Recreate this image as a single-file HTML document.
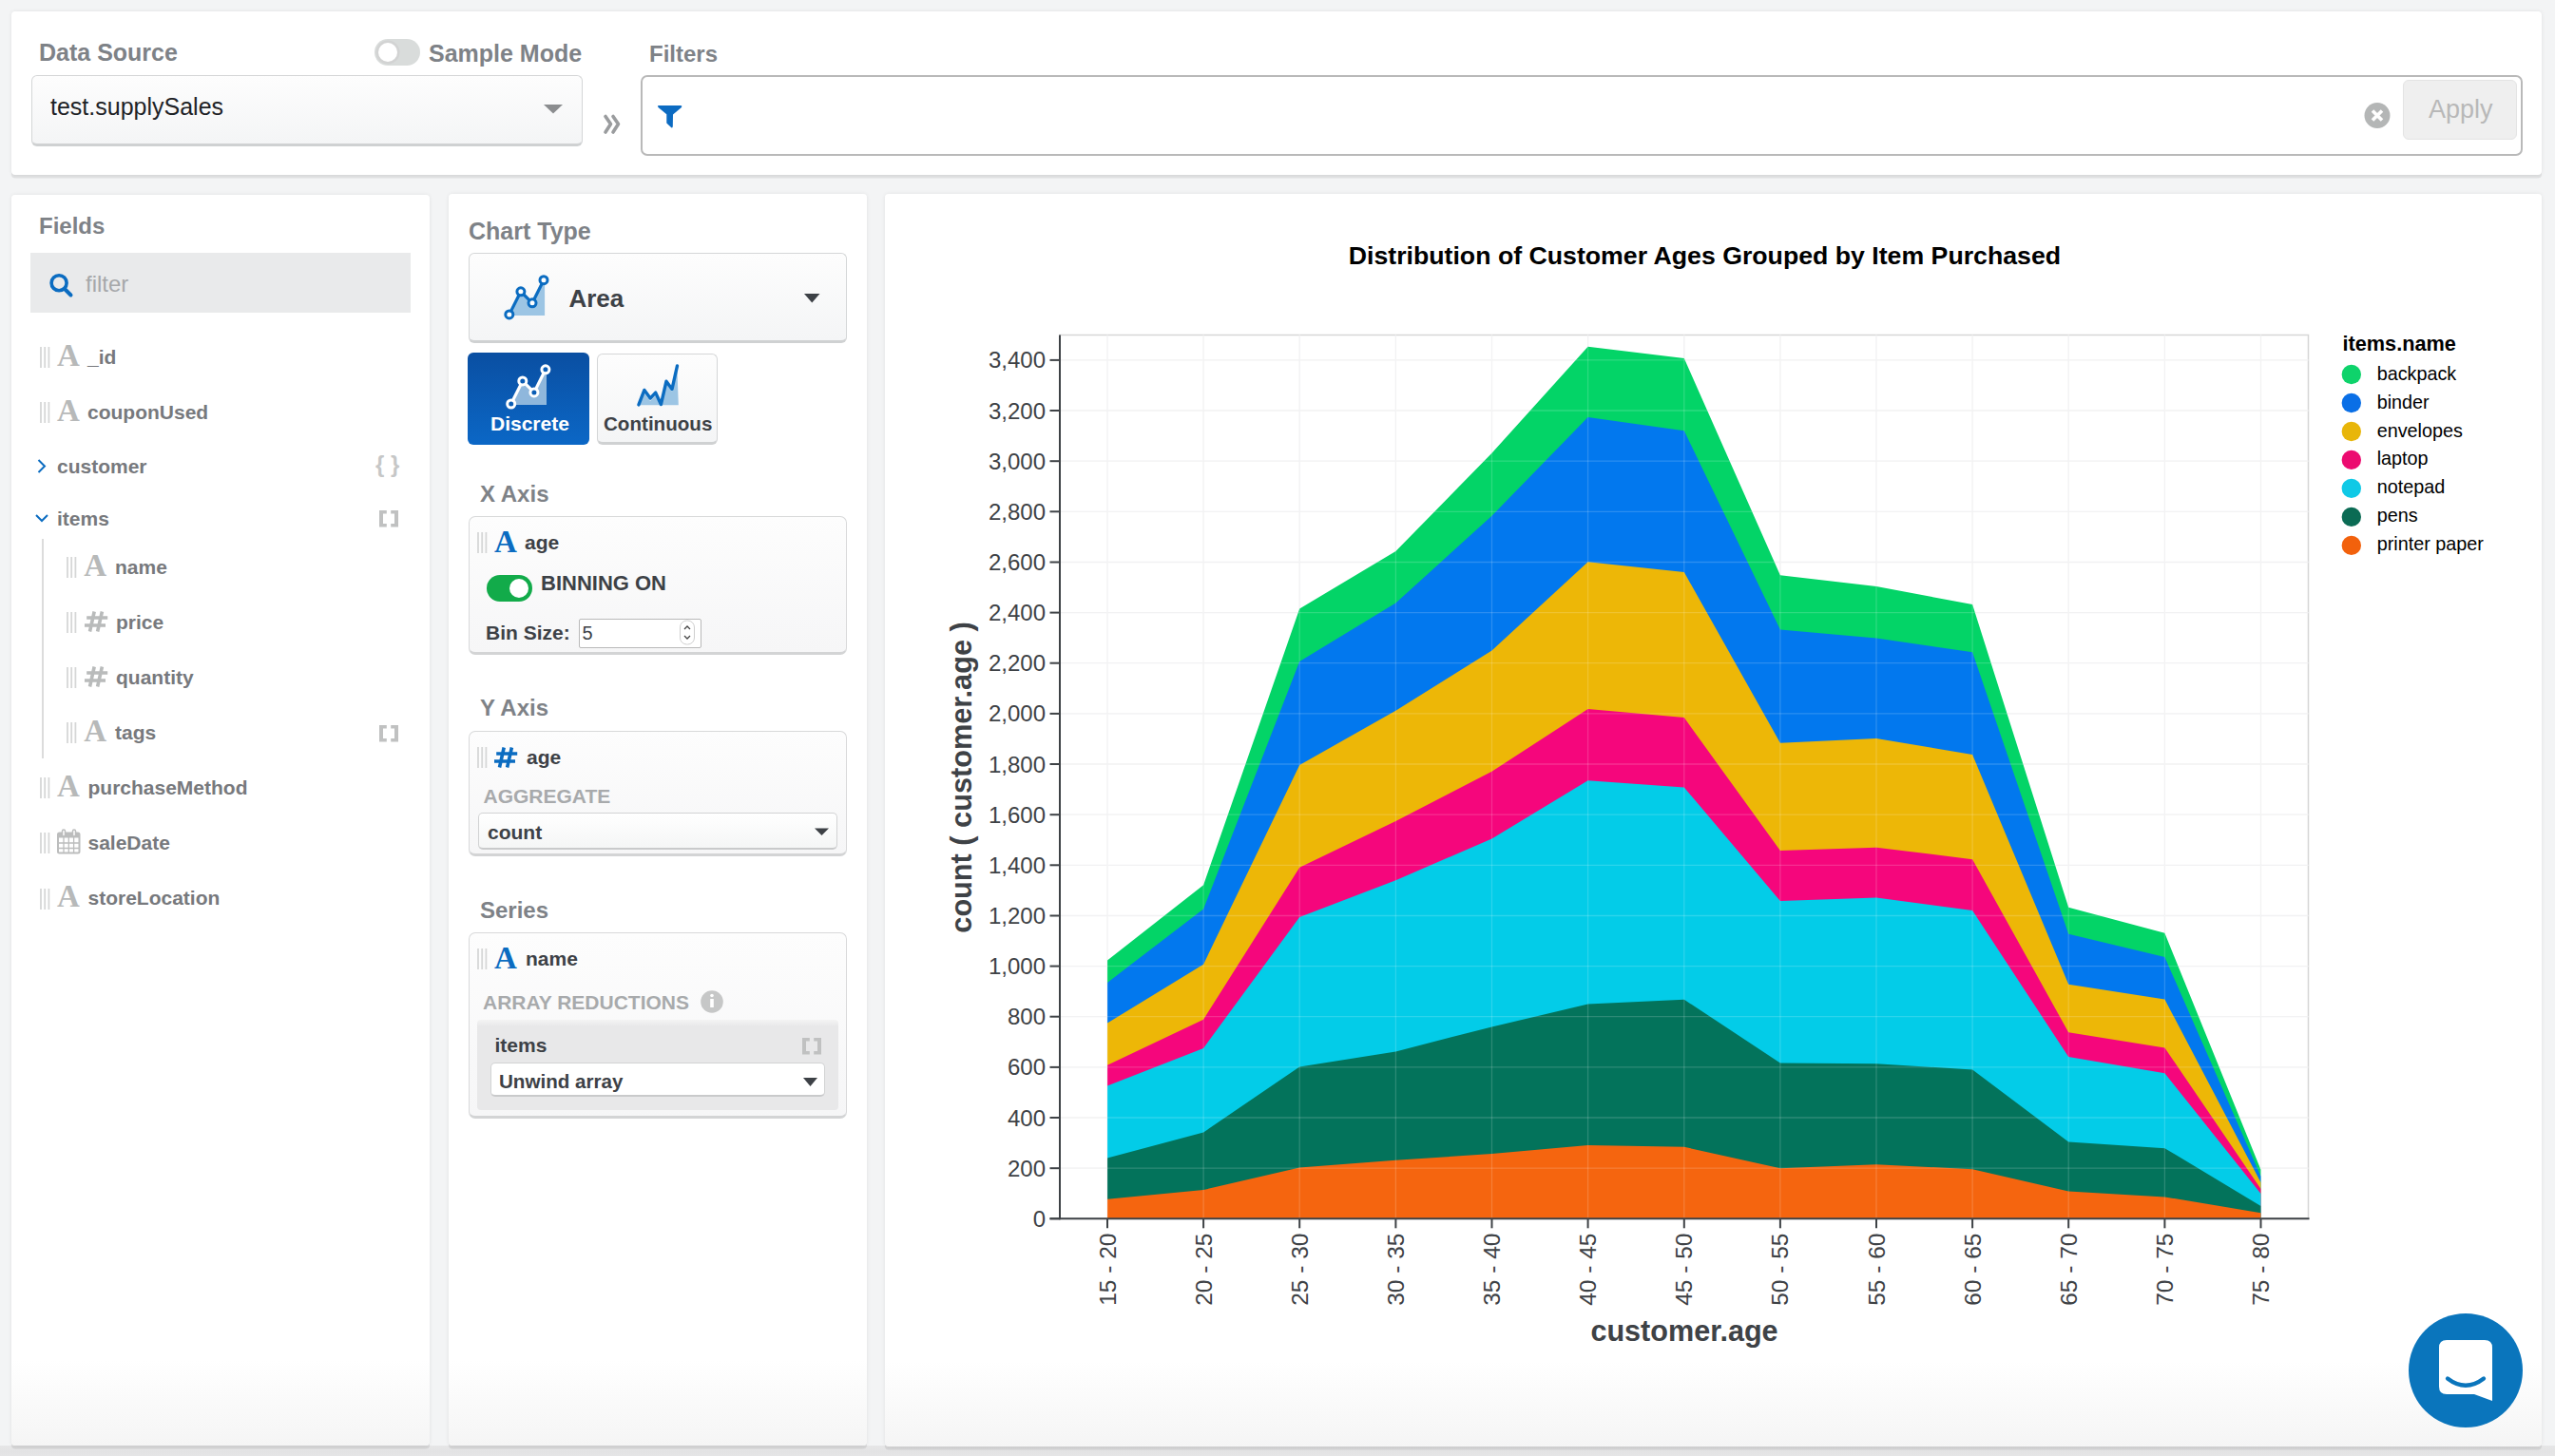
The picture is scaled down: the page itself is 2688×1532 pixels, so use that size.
<!DOCTYPE html>
<html><head><meta charset="utf-8"><title>Chart Builder</title>
<style>
html,body{margin:0;padding:0}
body{width:2688px;height:1532px;position:relative;overflow:hidden;background:#f3f4f5;font-family:"Liberation Sans",sans-serif}
.t{position:absolute;line-height:1;white-space:nowrap}
.ab{position:absolute;overflow:visible}
.ab text{font-family:"Liberation Sans",sans-serif}
.panel{position:absolute;background:#fff;border-radius:4px;box-shadow:0 0 4px rgba(0,0,0,.08),0 3.5px 0 rgba(0,0,0,.07)}
.pg{background:linear-gradient(#fff calc(100% - 90px),#f5f5f5)}
.sel{position:absolute;box-sizing:border-box;border:1px solid #d4d6d7;border-bottom:3px solid #cfd1d2;border-radius:6px;background:linear-gradient(#fdfdfd,#f4f5f6)}
.sel2{position:absolute;box-sizing:border-box;border:1px solid #d2d3d4;border-bottom:2px solid #c9cacb;border-radius:5px;background:linear-gradient(#ffffff,#f5f6f6)}
.card{position:absolute;box-sizing:border-box;border:1px solid #d8d9da;border-bottom:3px solid #d3d4d5;border-radius:7px;background:linear-gradient(#fdfdfd,#f6f6f7)}
</style></head><body>
<div style="position:absolute;left:0;top:1521px;width:2688px;height:11px;background:linear-gradient(#e6e6e7,#e3e3e4 6px,#e5e5e6)"></div>
<div class="panel" style="left:12px;top:12px;width:2662px;height:172px"></div>
<div class="panel pg" style="left:12px;top:205px;width:440px;height:1316px"></div>
<div class="panel pg" style="left:472px;top:204px;width:440px;height:1317px"></div>
<div class="panel pg" style="left:931px;top:204px;width:1743px;height:1318px"></div>
<div class="t" style="left:41.0px;top:43.4px;font-size:25px;color:#7e8287;font-weight:700;font-family:'Liberation Sans',sans-serif;">Data Source</div>
<div style="position:absolute;left:394px;top:41px;width:47.5px;height:28px;border-radius:14px;background:#d9dcdb;"></div>
<div style="position:absolute;left:398px;top:45px;width:20px;height:20px;border-radius:50%;background:#fff;box-shadow:0 0 0 2.5px #d2d3d3"></div>
<div class="t" style="left:451.0px;top:43.6px;font-size:25px;color:#7e8287;font-weight:700;font-family:'Liberation Sans',sans-serif;">Sample Mode</div>
<div class="t" style="left:683.0px;top:44.5px;font-size:24px;color:#7e8287;font-weight:700;font-family:'Liberation Sans',sans-serif;">Filters</div>
<div class="sel" style="left:33px;top:79px;width:580px;height:75px;"></div>
<div class="t" style="left:53.0px;top:100.4px;font-size:25px;color:#1d2226;font-weight:400;font-family:'Liberation Sans',sans-serif;">test.supplySales</div>
<svg class="ab" style="left:0;top:0" width="2688" height="200"><polygon points="572,110 592,110 582,119.5" fill="#8b8d8f"/><path d="M637,122.5 L642.5,130.5 L637,139 M645,122.5 L650.5,130.5 L645,139" stroke="#9a9c9e" stroke-width="3.6" fill="none" stroke-linecap="round" stroke-linejoin="round"/></svg>
<div style="position:absolute;left:674px;top:79px;width:1976px;height:81px;border:2px solid #b9b9b9;border-radius:7px;background:#fff"></div>
<div style="position:absolute;left:2528px;top:84px;width:118px;height:61px;border:1px solid #e4e4e4;border-radius:6px;background:#efefef"></div>
<div class="t" style="left:2555.0px;top:101.6px;font-size:27px;color:#b8b8b8;font-weight:400;font-family:'Liberation Sans',sans-serif;">Apply</div>
<svg class="ab" style="left:0;top:0" width="2688" height="200"><path d="M692.5,111 L716.5,111 Q718,111.5 717,113 L708,120.5 L707.8,133 Q707.5,135.5 705.5,133.5 L701.3,129.5 L701.3,120.2 L692.5,113 Q691.5,111.5 692.5,111 Z" fill="#0c6bc2"/><circle cx="2501" cy="121.5" r="13.5" fill="#b4b6b6"/><path d="M2496,116.5 L2506,126.5 M2506,116.5 L2496,126.5" stroke="#fff" stroke-width="3.6"/></svg>
<div class="t" style="left:41.0px;top:226.2px;font-size:24px;color:#7e8287;font-weight:700;font-family:'Liberation Sans',sans-serif;">Fields</div>
<div style="position:absolute;left:32px;top:266px;width:400px;height:63px;background:#e9eaeb;"></div>
<svg class="ab" style="left:0;top:0" width="460" height="1000"><circle cx="62.1" cy="297.7" r="8" stroke="#0b6cc1" stroke-width="3.6" fill="none"/><line x1="68.5" y1="304.5" x2="74.5" y2="310.5" stroke="#0b6cc1" stroke-width="4" stroke-linecap="round"/></svg>
<div class="t" style="left:90.0px;top:286.7px;font-size:24px;color:#a6a8aa;font-weight:400;font-family:'Liberation Sans',sans-serif;">filter</div>
<svg class="ab" style="left:42px;top:365.2px" width="12" height="22"><path d="M1,0 V22 M5.2,0 V22 M9.4,0 V22" stroke="#d6d7d7" stroke-width="1.8"/></svg>
<div class="t" style="left:60.0px;top:357.9px;font-size:33px;color:#b7b9b9;font-weight:700;font-family:'Liberation Serif',sans-serif;">A</div>
<div class="t" style="left:92.0px;top:364.9px;font-size:21px;color:#77797d;font-weight:700;font-family:'Liberation Sans',sans-serif;">_id</div>
<svg class="ab" style="left:42px;top:423.3px" width="12" height="22"><path d="M1,0 V22 M5.2,0 V22 M9.4,0 V22" stroke="#d6d7d7" stroke-width="1.8"/></svg>
<div class="t" style="left:60.0px;top:416.0px;font-size:33px;color:#b7b9b9;font-weight:700;font-family:'Liberation Serif',sans-serif;">A</div>
<div class="t" style="left:92.0px;top:423.0px;font-size:21px;color:#77797d;font-weight:700;font-family:'Liberation Sans',sans-serif;">couponUsed</div>
<svg class="ab" style="left:0;top:0" width="460" height="1000"><polyline points="40.5,484 47,490.5 40.5,497" stroke="#0b6cc1" stroke-width="2" fill="none"/><polyline points="38,542 44,548 50,542" stroke="#0b6cc1" stroke-width="2" fill="none"/></svg>
<div class="t" style="left:60.0px;top:480.0px;font-size:21px;color:#77797d;font-weight:700;font-family:'Liberation Sans',sans-serif;">customer</div>
<div class="t" style="left:395.0px;top:476.7px;font-size:24px;color:#c6c7c7;font-weight:700;font-family:'Liberation Sans',sans-serif;">{ }</div>
<div class="t" style="left:60.0px;top:535.1px;font-size:21px;color:#77797d;font-weight:700;font-family:'Liberation Sans',sans-serif;">items</div>
<svg class="ab" style="left:399px;top:537px" width="21" height="19"><path d="M0,0 H7.8 V3.6 H4 V13.9 H7.8 V17.5 H0 Z M20,0 H12.2 V3.6 H16 V13.9 H12.2 V17.5 H20 Z" fill="#c0c1c1"/></svg>
<div style="position:absolute;left:44px;top:567px;width:2px;height:231px;background:#dcdcdc"></div>
<svg class="ab" style="left:70px;top:586.0px" width="12" height="22"><path d="M1,0 V22 M5.2,0 V22 M9.4,0 V22" stroke="#d6d7d7" stroke-width="1.8"/></svg>
<div class="t" style="left:88.2px;top:578.7px;font-size:33px;color:#b7b9b9;font-weight:700;font-family:'Liberation Serif',sans-serif;">A</div>
<div class="t" style="left:121.0px;top:585.7px;font-size:21px;color:#77797d;font-weight:700;font-family:'Liberation Sans',sans-serif;">name</div>
<svg class="ab" style="left:70px;top:643.9px" width="12" height="22"><path d="M1,0 V22 M5.2,0 V22 M9.4,0 V22" stroke="#d6d7d7" stroke-width="1.8"/></svg>
<svg class="ab" style="left:88.8px;top:643.1999999999999px" width="26" height="23"><path d="M10.2,0.5 L5.5,21.5 M18.4,0.5 L13.6,21.5 M2.2,7 H24.2 M0,15 H22" stroke="#b9bbbb" stroke-width="3.6" fill="none"/></svg>
<div class="t" style="left:122.0px;top:643.6px;font-size:21px;color:#77797d;font-weight:700;font-family:'Liberation Sans',sans-serif;">price</div>
<svg class="ab" style="left:70px;top:702.1px" width="12" height="22"><path d="M1,0 V22 M5.2,0 V22 M9.4,0 V22" stroke="#d6d7d7" stroke-width="1.8"/></svg>
<svg class="ab" style="left:88.8px;top:701.4px" width="26" height="23"><path d="M10.2,0.5 L5.5,21.5 M18.4,0.5 L13.6,21.5 M2.2,7 H24.2 M0,15 H22" stroke="#b9bbbb" stroke-width="3.6" fill="none"/></svg>
<div class="t" style="left:122.0px;top:701.8px;font-size:21px;color:#77797d;font-weight:700;font-family:'Liberation Sans',sans-serif;">quantity</div>
<svg class="ab" style="left:70px;top:760.2px" width="12" height="22"><path d="M1,0 V22 M5.2,0 V22 M9.4,0 V22" stroke="#d6d7d7" stroke-width="1.8"/></svg>
<div class="t" style="left:88.2px;top:752.9px;font-size:33px;color:#b7b9b9;font-weight:700;font-family:'Liberation Serif',sans-serif;">A</div>
<div class="t" style="left:121.0px;top:759.9px;font-size:21px;color:#77797d;font-weight:700;font-family:'Liberation Sans',sans-serif;">tags</div>
<svg class="ab" style="left:399px;top:762.5px" width="21" height="19"><path d="M0,0 H7.8 V3.6 H4 V13.9 H7.8 V17.5 H0 Z M20,0 H12.2 V3.6 H16 V13.9 H12.2 V17.5 H20 Z" fill="#c0c1c1"/></svg>
<svg class="ab" style="left:42px;top:818.0px" width="12" height="22"><path d="M1,0 V22 M5.2,0 V22 M9.4,0 V22" stroke="#d6d7d7" stroke-width="1.8"/></svg>
<div class="t" style="left:60.1px;top:810.7px;font-size:33px;color:#b7b9b9;font-weight:700;font-family:'Liberation Serif',sans-serif;">A</div>
<div class="t" style="left:92.5px;top:817.7px;font-size:21px;color:#77797d;font-weight:700;font-family:'Liberation Sans',sans-serif;">purchaseMethod</div>
<svg class="ab" style="left:42px;top:876.1px" width="12" height="22"><path d="M1,0 V22 M5.2,0 V22 M9.4,0 V22" stroke="#d6d7d7" stroke-width="1.8"/></svg>
<svg class="ab" style="left:60px;top:872px" width="25" height="27"><rect x="1" y="4.5" width="22.5" height="21" rx="1.5" fill="none" stroke="#bcbdbd" stroke-width="2"/><rect x="1" y="4.5" width="22.5" height="5" fill="#bcbdbd"/><path d="M7,9 V25 M12.3,9 V25 M17.6,9 V25 M1,15 H23.5 M1,20.5 H23.5" stroke="#bcbdbd" stroke-width="1.3"/><rect x="5.5" y="1" width="3" height="7" rx="1.5" fill="#fff" stroke="#bcbdbd" stroke-width="1.5"/><rect x="16.5" y="1" width="3" height="7" rx="1.5" fill="#fff" stroke="#bcbdbd" stroke-width="1.5"/></svg>
<div class="t" style="left:92.5px;top:875.8px;font-size:21px;color:#77797d;font-weight:700;font-family:'Liberation Sans',sans-serif;">saleDate</div>
<svg class="ab" style="left:42px;top:934.5px" width="12" height="22"><path d="M1,0 V22 M5.2,0 V22 M9.4,0 V22" stroke="#d6d7d7" stroke-width="1.8"/></svg>
<div class="t" style="left:60.1px;top:927.2px;font-size:33px;color:#b7b9b9;font-weight:700;font-family:'Liberation Serif',sans-serif;">A</div>
<div class="t" style="left:92.5px;top:934.2px;font-size:21px;color:#77797d;font-weight:700;font-family:'Liberation Sans',sans-serif;">storeLocation</div>
<div class="t" style="left:493.0px;top:230.5px;font-size:25px;color:#7e8287;font-weight:700;font-family:'Liberation Sans',sans-serif;">Chart Type</div>
<div class="sel" style="left:493px;top:266px;width:398px;height:95px;"></div>
<svg class="ab" style="left:0;top:0" width="920" height="1200"><polygon points="538.8,331.9 538.8,325.9 547.9,306.8 560.0,318.8 572.0,294.7 573.0999999999999,298.7 573.0999999999999,331.9" fill="#9cc5e4"/><polyline points="535.8,330.9 547.9,306.8 560.0,318.8 572.0,294.7" stroke="#0b6cc1" stroke-width="3.2" fill="none"/><circle cx="535.8" cy="330.9" r="4" fill="#fff" stroke="#0b6cc1" stroke-width="3"/><circle cx="547.9" cy="306.8" r="4" fill="#fff" stroke="#0b6cc1" stroke-width="3"/><circle cx="560.0" cy="318.8" r="4" fill="#fff" stroke="#0b6cc1" stroke-width="3"/><circle cx="572.0" cy="294.7" r="4" fill="#fff" stroke="#0b6cc1" stroke-width="3"/><polygon points="846,309 862.5,309 854.25,318.5" fill="#3d4146"/></svg>
<div class="t" style="left:598.4px;top:300.5px;font-size:26px;color:#3d4146;font-weight:700;font-family:'Liberation Sans',sans-serif;">Area</div>
<div style="position:absolute;left:492px;top:371px;width:128px;height:97px;border-radius:6px;background:linear-gradient(#0a4fa2,#0b67c6);"></div>
<div class="sel" style="left:628px;top:371.5px;width:127px;height:96px;"></div>
<svg class="ab" style="left:0;top:0" width="920" height="1200"><polygon points="540.7,426 540.7,420 549.8,400.9 561.9,412.9 573.9,388.8 575.0,392.8 575.0,426" fill="#8fb7dc"/><polyline points="537.7,425.0 549.8,400.9 561.9,412.9 573.9,388.8" stroke="#ffffff" stroke-width="3.2" fill="none"/><circle cx="537.7" cy="425.0" r="4" fill="#0b5db5" stroke="#ffffff" stroke-width="3"/><circle cx="549.8" cy="400.9" r="4" fill="#0b5db5" stroke="#ffffff" stroke-width="3"/><circle cx="561.9" cy="412.9" r="4" fill="#0b5db5" stroke="#ffffff" stroke-width="3"/><circle cx="573.9" cy="388.8" r="4" fill="#0b5db5" stroke="#ffffff" stroke-width="3"/><polygon points="712.5,390 713.8,426.3 672.5,426.3 677.9,414 684.1,422 689.7,416 695.4,426 701,404 707,412" fill="#9cc5e4"/><polyline points="671.9,425.9 677.9,410.4 684.1,419.1 689.7,413.1 695.4,425.5 701,401.2 707,409.4 712.5,384.9" stroke="#0b6cc1" stroke-width="3.4" fill="none" stroke-linejoin="round" stroke-linecap="round"/></svg>
<div class="t" style="left:516.0px;top:435.2px;font-size:21px;color:#ffffff;font-weight:700;font-family:'Liberation Sans',sans-serif;">Discrete</div>
<div class="t" style="left:635.0px;top:435.6px;font-size:20.6px;color:#3d4146;font-weight:700;font-family:'Liberation Sans',sans-serif;">Continuous</div>
<div class="t" style="left:505.0px;top:508.1px;font-size:24px;color:#7e8287;font-weight:700;font-family:'Liberation Sans',sans-serif;">X Axis</div>
<div class="card" style="left:492.5px;top:543px;width:398px;height:146px;"></div>
<svg class="ab" style="left:502px;top:560px" width="12" height="22"><path d="M1,0 V22 M5.2,0 V22 M9.4,0 V22" stroke="#d6d7d7" stroke-width="1.8"/></svg>
<div class="t" style="left:520.0px;top:554.1px;font-size:33px;color:#0b6cc1;font-weight:700;font-family:'Liberation Serif',sans-serif;">A</div>
<div class="t" style="left:552.0px;top:560.4px;font-size:21px;color:#3d4146;font-weight:700;font-family:'Liberation Sans',sans-serif;">age</div>
<div style="position:absolute;left:512px;top:604.5px;width:48px;height:28px;border-radius:14px;background:#12ab4a"></div>
<div style="position:absolute;left:536px;top:609px;width:20px;height:20px;border-radius:50%;background:#fff"></div>
<div class="t" style="left:569.0px;top:602.8px;font-size:22px;color:#3d4146;font-weight:700;font-family:'Liberation Sans',sans-serif;">BINNING ON</div>
<div class="t" style="left:511.0px;top:655.0px;font-size:21px;color:#3d4146;font-weight:700;font-family:'Liberation Sans',sans-serif;">Bin Size:</div>
<div style="position:absolute;left:608.5px;top:650.5px;width:127px;height:29px;border:1px solid #b9b9b9;background:#fff;border-radius:2px"></div>
<div class="t" style="left:612.6px;top:655.6px;font-size:20px;color:#3d4146;font-weight:400;font-family:'Liberation Sans',sans-serif;">5</div>
<svg class="ab" style="left:0;top:0" width="920" height="1200"><rect x="715.5" y="653" width="15" height="25" rx="7" fill="#fff" stroke="#cfcfcf" stroke-width="1"/><polyline points="720,662 723,659 726,662" stroke="#444" stroke-width="1.3" fill="none"/><polyline points="720,669 723,672 726,669" stroke="#444" stroke-width="1.3" fill="none"/></svg>
<div class="t" style="left:505.0px;top:733.2px;font-size:24px;color:#7e8287;font-weight:700;font-family:'Liberation Sans',sans-serif;">Y Axis</div>
<div class="card" style="left:492.5px;top:768.5px;width:398px;height:132px;"></div>
<svg class="ab" style="left:502px;top:786px" width="12" height="22"><path d="M1,0 V22 M5.2,0 V22 M9.4,0 V22" stroke="#d6d7d7" stroke-width="1.8"/></svg>
<svg class="ab" style="left:520.4px;top:785.8px" width="26" height="23"><path d="M10.2,0.5 L5.5,21.5 M18.4,0.5 L13.6,21.5 M2.2,7 H24.2 M0,15 H22" stroke="#0b6cc1" stroke-width="3.6" fill="none"/></svg>
<div class="t" style="left:554.0px;top:785.6px;font-size:21px;color:#3d4146;font-weight:700;font-family:'Liberation Sans',sans-serif;">age</div>
<div class="t" style="left:508.5px;top:827.2px;font-size:21px;color:#a8aaac;font-weight:700;font-family:'Liberation Sans',sans-serif;">AGGREGATE</div>
<div class="sel2" style="left:503px;top:854.5px;width:378px;height:39px;"></div>
<div class="t" style="left:513.0px;top:865.0px;font-size:21px;color:#3d4146;font-weight:700;font-family:'Liberation Sans',sans-serif;">count</div>
<svg class="ab" style="left:0;top:0" width="920" height="1200"><polygon points="857,871.5 872,871.5 864.5,879" fill="#3d4146"/></svg>
<div class="t" style="left:505.0px;top:945.5px;font-size:24px;color:#7e8287;font-weight:700;font-family:'Liberation Sans',sans-serif;">Series</div>
<div class="card" style="left:493px;top:981px;width:398px;height:196px;"></div>
<svg class="ab" style="left:502px;top:998px" width="12" height="22"><path d="M1,0 V22 M5.2,0 V22 M9.4,0 V22" stroke="#d6d7d7" stroke-width="1.8"/></svg>
<div class="t" style="left:520.0px;top:991.6px;font-size:33px;color:#0b6cc1;font-weight:700;font-family:'Liberation Serif',sans-serif;">A</div>
<div class="t" style="left:553.0px;top:997.8px;font-size:21px;color:#3d4146;font-weight:700;font-family:'Liberation Sans',sans-serif;">name</div>
<div class="t" style="left:508.0px;top:1044.2px;font-size:21px;color:#a8aaac;font-weight:700;font-family:'Liberation Sans',sans-serif;">ARRAY REDUCTIONS</div>
<svg class="ab" style="left:0;top:0" width="920" height="1200"><circle cx="749" cy="1054" r="11.8" fill="#c6c7c7"/><circle cx="749" cy="1047.5" r="1.8" fill="#fff"/><rect x="747.2" y="1051" width="3.6" height="9" fill="#fff"/></svg>
<div style="position:absolute;left:502px;top:1073px;width:380px;height:95px;background:linear-gradient(#f4f4f4,#e8e8e9 7px,#e8e8e9);border-radius:4px"></div>
<div class="t" style="left:520.5px;top:1089.2px;font-size:21px;color:#3d4146;font-weight:700;font-family:'Liberation Sans',sans-serif;">items</div>
<svg class="ab" style="left:844px;top:1091.5px" width="21" height="19"><path d="M0,0 H7.8 V3.6 H4 V13.9 H7.8 V17.5 H0 Z M20,0 H12.2 V3.6 H16 V13.9 H12.2 V17.5 H20 Z" fill="#c0c1c1"/></svg>
<div class="sel2" style="left:515.5px;top:1118px;width:352px;height:36px;background:#fff"></div>
<div class="t" style="left:525.0px;top:1128.0px;font-size:20.6px;color:#3d4146;font-weight:700;font-family:'Liberation Sans',sans-serif;">Unwind array</div>
<svg class="ab" style="left:0;top:0" width="920" height="1200"><polygon points="845,1134 860,1134 852.5,1143" fill="#3d4146"/></svg>
<svg class="ab" style="left:0;top:0" width="2688" height="1532"><rect x="1115" y="352.5" width="1313.5" height="929.8" fill="#fff" stroke="#d6d6d6" stroke-width="1.5"/><line x1="1115" x2="2428.5" y1="1282.3" y2="1282.3" stroke="#f0f0f1" stroke-width="1.3"/><line x1="1115" x2="2428.5" y1="1229.2" y2="1229.2" stroke="#f0f0f1" stroke-width="1.3"/><line x1="1115" x2="2428.5" y1="1176.0" y2="1176.0" stroke="#f0f0f1" stroke-width="1.3"/><line x1="1115" x2="2428.5" y1="1122.9" y2="1122.9" stroke="#f0f0f1" stroke-width="1.3"/><line x1="1115" x2="2428.5" y1="1069.7" y2="1069.7" stroke="#f0f0f1" stroke-width="1.3"/><line x1="1115" x2="2428.5" y1="1016.6" y2="1016.6" stroke="#f0f0f1" stroke-width="1.3"/><line x1="1115" x2="2428.5" y1="963.5" y2="963.5" stroke="#f0f0f1" stroke-width="1.3"/><line x1="1115" x2="2428.5" y1="910.3" y2="910.3" stroke="#f0f0f1" stroke-width="1.3"/><line x1="1115" x2="2428.5" y1="857.2" y2="857.2" stroke="#f0f0f1" stroke-width="1.3"/><line x1="1115" x2="2428.5" y1="804.0" y2="804.0" stroke="#f0f0f1" stroke-width="1.3"/><line x1="1115" x2="2428.5" y1="750.9" y2="750.9" stroke="#f0f0f1" stroke-width="1.3"/><line x1="1115" x2="2428.5" y1="697.7" y2="697.7" stroke="#f0f0f1" stroke-width="1.3"/><line x1="1115" x2="2428.5" y1="644.6" y2="644.6" stroke="#f0f0f1" stroke-width="1.3"/><line x1="1115" x2="2428.5" y1="591.5" y2="591.5" stroke="#f0f0f1" stroke-width="1.3"/><line x1="1115" x2="2428.5" y1="538.3" y2="538.3" stroke="#f0f0f1" stroke-width="1.3"/><line x1="1115" x2="2428.5" y1="485.2" y2="485.2" stroke="#f0f0f1" stroke-width="1.3"/><line x1="1115" x2="2428.5" y1="432.0" y2="432.0" stroke="#f0f0f1" stroke-width="1.3"/><line x1="1115" x2="2428.5" y1="378.9" y2="378.9" stroke="#f0f0f1" stroke-width="1.3"/><line x1="1165.0" x2="1165.0" y1="352.5" y2="1282" stroke="#f0f0f1" stroke-width="1.3"/><line x1="1266.1" x2="1266.1" y1="352.5" y2="1282" stroke="#f0f0f1" stroke-width="1.3"/><line x1="1367.2" x2="1367.2" y1="352.5" y2="1282" stroke="#f0f0f1" stroke-width="1.3"/><line x1="1468.4" x2="1468.4" y1="352.5" y2="1282" stroke="#f0f0f1" stroke-width="1.3"/><line x1="1569.5" x2="1569.5" y1="352.5" y2="1282" stroke="#f0f0f1" stroke-width="1.3"/><line x1="1670.6" x2="1670.6" y1="352.5" y2="1282" stroke="#f0f0f1" stroke-width="1.3"/><line x1="1771.8" x2="1771.8" y1="352.5" y2="1282" stroke="#f0f0f1" stroke-width="1.3"/><line x1="1872.9" x2="1872.9" y1="352.5" y2="1282" stroke="#f0f0f1" stroke-width="1.3"/><line x1="1974.0" x2="1974.0" y1="352.5" y2="1282" stroke="#f0f0f1" stroke-width="1.3"/><line x1="2075.1" x2="2075.1" y1="352.5" y2="1282" stroke="#f0f0f1" stroke-width="1.3"/><line x1="2176.2" x2="2176.2" y1="352.5" y2="1282" stroke="#f0f0f1" stroke-width="1.3"/><line x1="2277.4" x2="2277.4" y1="352.5" y2="1282" stroke="#f0f0f1" stroke-width="1.3"/><line x1="2378.5" x2="2378.5" y1="352.5" y2="1282" stroke="#f0f0f1" stroke-width="1.3"/><polygon points="1165.0,1010.5 1266.1,931.3 1367.2,640.6 1468.4,580.0 1569.5,476.7 1670.6,364.8 1771.8,377.0 1872.9,605.3 1974.0,617.0 2075.1,636.1 2176.2,954.7 2277.4,981.8 2378.5,1230.8 2378.5,1282.3 1165.0,1282.3" fill="#03d467"/><polygon points="1165.0,1033.9 1266.1,956.5 1367.2,695.9 1468.4,634.5 1569.5,542.8 1670.6,438.9 1771.8,453.3 1872.9,662.4 1974.0,671.4 2075.1,686.3 2176.2,982.8 2277.4,1007.0 2378.5,1237.7 2378.5,1282.3 1165.0,1282.3" fill="#0278ee"/><polygon points="1165.0,1076.6 1266.1,1014.7 1367.2,805.1 1468.4,747.7 1569.5,684.5 1670.6,591.2 1771.8,602.1 1872.9,781.7 1974.0,776.9 2075.1,793.9 2176.2,1035.7 2277.4,1051.4 2378.5,1244.3 2378.5,1282.3 1165.0,1282.3" fill="#edb707"/><polygon points="1165.0,1120.8 1266.1,1072.7 1367.2,912.7 1468.4,864.1 1569.5,811.7 1670.6,746.1 1771.8,755.1 1872.9,894.9 1974.0,891.7 2075.1,904.2 2176.2,1086.2 2277.4,1102.4 2378.5,1250.9 2378.5,1282.3 1165.0,1282.3" fill="#f5067c"/><polygon points="1165.0,1142.5 1266.1,1102.9 1367.2,965.0 1468.4,926.3 1569.5,882.4 1670.6,821.3 1771.8,828.5 1872.9,948.0 1974.0,944.6 2075.1,958.1 2176.2,1112.0 2277.4,1129.3 2378.5,1256.0 2378.5,1282.3 1165.0,1282.3" fill="#03cce8"/><polygon points="1165.0,1218.5 1266.1,1191.4 1367.2,1122.6 1468.4,1106.4 1569.5,1080.4 1670.6,1056.5 1771.8,1051.7 1872.9,1118.6 1974.0,1119.2 2075.1,1125.5 2176.2,1201.5 2277.4,1208.2 2378.5,1269.0 2378.5,1282.3 1165.0,1282.3" fill="#03735b"/><polygon points="1165.0,1261.8 1266.1,1252.0 1367.2,1228.6 1468.4,1220.7 1569.5,1214.0 1670.6,1205.0 1771.8,1206.8 1872.9,1229.2 1974.0,1225.2 2075.1,1230.2 2176.2,1253.6 2277.4,1259.4 2378.5,1276.2 2378.5,1282.3 1165.0,1282.3" fill="#f5650f"/><line x1="1115" x2="2428.5" y1="1282.3" y2="1282.3" stroke="rgba(255,255,255,0.17)" stroke-width="1.3"/><line x1="1115" x2="2428.5" y1="1229.2" y2="1229.2" stroke="rgba(255,255,255,0.17)" stroke-width="1.3"/><line x1="1115" x2="2428.5" y1="1176.0" y2="1176.0" stroke="rgba(255,255,255,0.17)" stroke-width="1.3"/><line x1="1115" x2="2428.5" y1="1122.9" y2="1122.9" stroke="rgba(255,255,255,0.17)" stroke-width="1.3"/><line x1="1115" x2="2428.5" y1="1069.7" y2="1069.7" stroke="rgba(255,255,255,0.17)" stroke-width="1.3"/><line x1="1115" x2="2428.5" y1="1016.6" y2="1016.6" stroke="rgba(255,255,255,0.17)" stroke-width="1.3"/><line x1="1115" x2="2428.5" y1="963.5" y2="963.5" stroke="rgba(255,255,255,0.17)" stroke-width="1.3"/><line x1="1115" x2="2428.5" y1="910.3" y2="910.3" stroke="rgba(255,255,255,0.17)" stroke-width="1.3"/><line x1="1115" x2="2428.5" y1="857.2" y2="857.2" stroke="rgba(255,255,255,0.17)" stroke-width="1.3"/><line x1="1115" x2="2428.5" y1="804.0" y2="804.0" stroke="rgba(255,255,255,0.17)" stroke-width="1.3"/><line x1="1115" x2="2428.5" y1="750.9" y2="750.9" stroke="rgba(255,255,255,0.17)" stroke-width="1.3"/><line x1="1115" x2="2428.5" y1="697.7" y2="697.7" stroke="rgba(255,255,255,0.17)" stroke-width="1.3"/><line x1="1115" x2="2428.5" y1="644.6" y2="644.6" stroke="rgba(255,255,255,0.17)" stroke-width="1.3"/><line x1="1115" x2="2428.5" y1="591.5" y2="591.5" stroke="rgba(255,255,255,0.17)" stroke-width="1.3"/><line x1="1115" x2="2428.5" y1="538.3" y2="538.3" stroke="rgba(255,255,255,0.17)" stroke-width="1.3"/><line x1="1115" x2="2428.5" y1="485.2" y2="485.2" stroke="rgba(255,255,255,0.17)" stroke-width="1.3"/><line x1="1115" x2="2428.5" y1="432.0" y2="432.0" stroke="rgba(255,255,255,0.17)" stroke-width="1.3"/><line x1="1115" x2="2428.5" y1="378.9" y2="378.9" stroke="rgba(255,255,255,0.17)" stroke-width="1.3"/><line x1="1165.0" x2="1165.0" y1="352.5" y2="1282" stroke="rgba(255,255,255,0.17)" stroke-width="1.3"/><line x1="1266.1" x2="1266.1" y1="352.5" y2="1282" stroke="rgba(255,255,255,0.17)" stroke-width="1.3"/><line x1="1367.2" x2="1367.2" y1="352.5" y2="1282" stroke="rgba(255,255,255,0.17)" stroke-width="1.3"/><line x1="1468.4" x2="1468.4" y1="352.5" y2="1282" stroke="rgba(255,255,255,0.17)" stroke-width="1.3"/><line x1="1569.5" x2="1569.5" y1="352.5" y2="1282" stroke="rgba(255,255,255,0.17)" stroke-width="1.3"/><line x1="1670.6" x2="1670.6" y1="352.5" y2="1282" stroke="rgba(255,255,255,0.17)" stroke-width="1.3"/><line x1="1771.8" x2="1771.8" y1="352.5" y2="1282" stroke="rgba(255,255,255,0.17)" stroke-width="1.3"/><line x1="1872.9" x2="1872.9" y1="352.5" y2="1282" stroke="rgba(255,255,255,0.17)" stroke-width="1.3"/><line x1="1974.0" x2="1974.0" y1="352.5" y2="1282" stroke="rgba(255,255,255,0.17)" stroke-width="1.3"/><line x1="2075.1" x2="2075.1" y1="352.5" y2="1282" stroke="rgba(255,255,255,0.17)" stroke-width="1.3"/><line x1="2176.2" x2="2176.2" y1="352.5" y2="1282" stroke="rgba(255,255,255,0.17)" stroke-width="1.3"/><line x1="2277.4" x2="2277.4" y1="352.5" y2="1282" stroke="rgba(255,255,255,0.17)" stroke-width="1.3"/><line x1="2378.5" x2="2378.5" y1="352.5" y2="1282" stroke="rgba(255,255,255,0.17)" stroke-width="1.3"/><line x1="1115" x2="1115" y1="352.5" y2="1283.3" stroke="#3e4246" stroke-width="2"/><line x1="1104.5" x2="2429.5" y1="1282.3" y2="1282.3" stroke="#3e4246" stroke-width="2"/><line x1="1104.5" x2="1115" y1="1282.3" y2="1282.3" stroke="#3e4246" stroke-width="2"/><text x="1100" y="1290.8" text-anchor="end" font-size="24" fill="#3e4246">0</text><line x1="1104.5" x2="1115" y1="1229.2" y2="1229.2" stroke="#3e4246" stroke-width="2"/><text x="1100" y="1237.7" text-anchor="end" font-size="24" fill="#3e4246">200</text><line x1="1104.5" x2="1115" y1="1176.0" y2="1176.0" stroke="#3e4246" stroke-width="2"/><text x="1100" y="1184.5" text-anchor="end" font-size="24" fill="#3e4246">400</text><line x1="1104.5" x2="1115" y1="1122.9" y2="1122.9" stroke="#3e4246" stroke-width="2"/><text x="1100" y="1131.4" text-anchor="end" font-size="24" fill="#3e4246">600</text><line x1="1104.5" x2="1115" y1="1069.7" y2="1069.7" stroke="#3e4246" stroke-width="2"/><text x="1100" y="1078.2" text-anchor="end" font-size="24" fill="#3e4246">800</text><line x1="1104.5" x2="1115" y1="1016.6" y2="1016.6" stroke="#3e4246" stroke-width="2"/><text x="1100" y="1025.1" text-anchor="end" font-size="24" fill="#3e4246">1,000</text><line x1="1104.5" x2="1115" y1="963.5" y2="963.5" stroke="#3e4246" stroke-width="2"/><text x="1100" y="972.0" text-anchor="end" font-size="24" fill="#3e4246">1,200</text><line x1="1104.5" x2="1115" y1="910.3" y2="910.3" stroke="#3e4246" stroke-width="2"/><text x="1100" y="918.8" text-anchor="end" font-size="24" fill="#3e4246">1,400</text><line x1="1104.5" x2="1115" y1="857.2" y2="857.2" stroke="#3e4246" stroke-width="2"/><text x="1100" y="865.7" text-anchor="end" font-size="24" fill="#3e4246">1,600</text><line x1="1104.5" x2="1115" y1="804.0" y2="804.0" stroke="#3e4246" stroke-width="2"/><text x="1100" y="812.5" text-anchor="end" font-size="24" fill="#3e4246">1,800</text><line x1="1104.5" x2="1115" y1="750.9" y2="750.9" stroke="#3e4246" stroke-width="2"/><text x="1100" y="759.4" text-anchor="end" font-size="24" fill="#3e4246">2,000</text><line x1="1104.5" x2="1115" y1="697.7" y2="697.7" stroke="#3e4246" stroke-width="2"/><text x="1100" y="706.2" text-anchor="end" font-size="24" fill="#3e4246">2,200</text><line x1="1104.5" x2="1115" y1="644.6" y2="644.6" stroke="#3e4246" stroke-width="2"/><text x="1100" y="653.1" text-anchor="end" font-size="24" fill="#3e4246">2,400</text><line x1="1104.5" x2="1115" y1="591.5" y2="591.5" stroke="#3e4246" stroke-width="2"/><text x="1100" y="600.0" text-anchor="end" font-size="24" fill="#3e4246">2,600</text><line x1="1104.5" x2="1115" y1="538.3" y2="538.3" stroke="#3e4246" stroke-width="2"/><text x="1100" y="546.8" text-anchor="end" font-size="24" fill="#3e4246">2,800</text><line x1="1104.5" x2="1115" y1="485.2" y2="485.2" stroke="#3e4246" stroke-width="2"/><text x="1100" y="493.7" text-anchor="end" font-size="24" fill="#3e4246">3,000</text><line x1="1104.5" x2="1115" y1="432.0" y2="432.0" stroke="#3e4246" stroke-width="2"/><text x="1100" y="440.5" text-anchor="end" font-size="24" fill="#3e4246">3,200</text><line x1="1104.5" x2="1115" y1="378.9" y2="378.9" stroke="#3e4246" stroke-width="2"/><text x="1100" y="387.4" text-anchor="end" font-size="24" fill="#3e4246">3,400</text><line x1="1165.0" x2="1165.0" y1="1282.3" y2="1292.3" stroke="#3e4246" stroke-width="2"/><text transform="translate(1173.5,1297.5) rotate(-90)" text-anchor="end" font-size="24.5" fill="#3e4246">15 - 20</text><line x1="1266.1" x2="1266.1" y1="1282.3" y2="1292.3" stroke="#3e4246" stroke-width="2"/><text transform="translate(1274.6,1297.5) rotate(-90)" text-anchor="end" font-size="24.5" fill="#3e4246">20 - 25</text><line x1="1367.2" x2="1367.2" y1="1282.3" y2="1292.3" stroke="#3e4246" stroke-width="2"/><text transform="translate(1375.8,1297.5) rotate(-90)" text-anchor="end" font-size="24.5" fill="#3e4246">25 - 30</text><line x1="1468.4" x2="1468.4" y1="1282.3" y2="1292.3" stroke="#3e4246" stroke-width="2"/><text transform="translate(1476.9,1297.5) rotate(-90)" text-anchor="end" font-size="24.5" fill="#3e4246">30 - 35</text><line x1="1569.5" x2="1569.5" y1="1282.3" y2="1292.3" stroke="#3e4246" stroke-width="2"/><text transform="translate(1578.0,1297.5) rotate(-90)" text-anchor="end" font-size="24.5" fill="#3e4246">35 - 40</text><line x1="1670.6" x2="1670.6" y1="1282.3" y2="1292.3" stroke="#3e4246" stroke-width="2"/><text transform="translate(1679.1,1297.5) rotate(-90)" text-anchor="end" font-size="24.5" fill="#3e4246">40 - 45</text><line x1="1771.8" x2="1771.8" y1="1282.3" y2="1292.3" stroke="#3e4246" stroke-width="2"/><text transform="translate(1780.2,1297.5) rotate(-90)" text-anchor="end" font-size="24.5" fill="#3e4246">45 - 50</text><line x1="1872.9" x2="1872.9" y1="1282.3" y2="1292.3" stroke="#3e4246" stroke-width="2"/><text transform="translate(1881.4,1297.5) rotate(-90)" text-anchor="end" font-size="24.5" fill="#3e4246">50 - 55</text><line x1="1974.0" x2="1974.0" y1="1282.3" y2="1292.3" stroke="#3e4246" stroke-width="2"/><text transform="translate(1982.5,1297.5) rotate(-90)" text-anchor="end" font-size="24.5" fill="#3e4246">55 - 60</text><line x1="2075.1" x2="2075.1" y1="1282.3" y2="1292.3" stroke="#3e4246" stroke-width="2"/><text transform="translate(2083.6,1297.5) rotate(-90)" text-anchor="end" font-size="24.5" fill="#3e4246">60 - 65</text><line x1="2176.2" x2="2176.2" y1="1282.3" y2="1292.3" stroke="#3e4246" stroke-width="2"/><text transform="translate(2184.8,1297.5) rotate(-90)" text-anchor="end" font-size="24.5" fill="#3e4246">65 - 70</text><line x1="2277.4" x2="2277.4" y1="1282.3" y2="1292.3" stroke="#3e4246" stroke-width="2"/><text transform="translate(2285.9,1297.5) rotate(-90)" text-anchor="end" font-size="24.5" fill="#3e4246">70 - 75</text><line x1="2378.5" x2="2378.5" y1="1282.3" y2="1292.3" stroke="#3e4246" stroke-width="2"/><text transform="translate(2387.0,1297.5) rotate(-90)" text-anchor="end" font-size="24.5" fill="#3e4246">75 - 80</text><text x="1772" y="1410.7" text-anchor="middle" font-size="30.6" font-weight="700" fill="#3e4246">customer.age</text><text transform="translate(1022,818) rotate(-90)" text-anchor="middle" font-size="30.7" font-weight="700" fill="#3e4246">count ( customer.age )</text><text x="1793.4" y="277.5" text-anchor="middle" font-size="26.7" font-weight="700" fill="#000">Distribution of Customer Ages Grouped by Item Purchased</text><text x="2464.5" y="369.3" font-size="21.7" font-weight="700" fill="#000">items.name</text><circle cx="2473.8" cy="394.0" r="10.2" fill="#0ed36b"/><text x="2500.7" y="399.5" font-size="19.8" fill="#000">backpack</text><circle cx="2473.8" cy="424.0" r="10.2" fill="#0a6fe6"/><text x="2500.7" y="429.5" font-size="19.8" fill="#000">binder</text><circle cx="2473.8" cy="454.0" r="10.2" fill="#e8b60a"/><text x="2500.7" y="459.5" font-size="19.8" fill="#000">envelopes</text><circle cx="2473.8" cy="483.9" r="10.2" fill="#ec0b70"/><text x="2500.7" y="489.4" font-size="19.8" fill="#000">laptop</text><circle cx="2473.8" cy="513.9" r="10.2" fill="#0fc9e6"/><text x="2500.7" y="519.4" font-size="19.8" fill="#000">notepad</text><circle cx="2473.8" cy="543.9" r="10.2" fill="#0b6b54"/><text x="2500.7" y="549.4" font-size="19.8" fill="#000">pens</text><circle cx="2473.8" cy="573.9" r="10.2" fill="#f2610c"/><text x="2500.7" y="579.4" font-size="19.8" fill="#000">printer paper</text><circle cx="2594" cy="1442" r="60" fill="#0a75bc"/><path d="M2574,1410 H2614 Q2622,1410 2622,1418 V1474 L2603,1467 H2574 Q2566,1467 2566,1459 V1418 Q2566,1410 2574,1410 Z" fill="#fff"/><path d="M2575,1450.5 Q2594,1465 2613,1450.5" stroke="#0a75bc" stroke-width="4.3" fill="none" stroke-linecap="round"/></svg>
</body></html>
